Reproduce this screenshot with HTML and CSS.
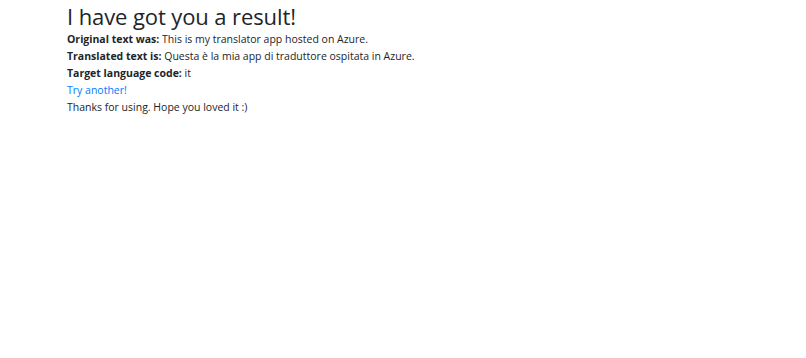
FILE: index.html
```html
<!DOCTYPE html>
<html>
<head>
	<title>Translator</title>
	<link rel="stylesheet" href="styles.css">
</head>
<body>
	<div class="container">
		<h1>I have got you a result!</h1>
		<div class="result">
			<p><b>Original text was:</b> This is my translator app hosted on Azure.</p>
			<p><b>Translated text is:</b> Questa è la mia app di traduttore ospitata in Azure.</p>
			<p><b>Target language code:</b> it</p>
			<a href="#">Try another!</a>
			<p>Thanks for using. Hope you loved it :)</p>
		</div>
	</div>
</body>
</html>
```

FILE: styles.css
```css
body {
	margin: 0;
	padding: 0;
	font-family: 'Open Sans', 'Noto Sans', sans-serif;
	font-size: 10.5px;
	line-height: 17px;
	color: #212529;
	background-color: white;
}
.container {
	padding: 0 67px;
}
h1 {
	margin: 0;
	padding-top: 1px;
	font-size: 22px;
	font-weight: 500;
	line-height: 30px;
	letter-spacing: -0.1px;
}
.result p {
	margin: 0;
}
.result b {
	font-weight: bold;
}
.result a {
	display: block;
	color: #007bff;
	text-decoration: none;
}
```
